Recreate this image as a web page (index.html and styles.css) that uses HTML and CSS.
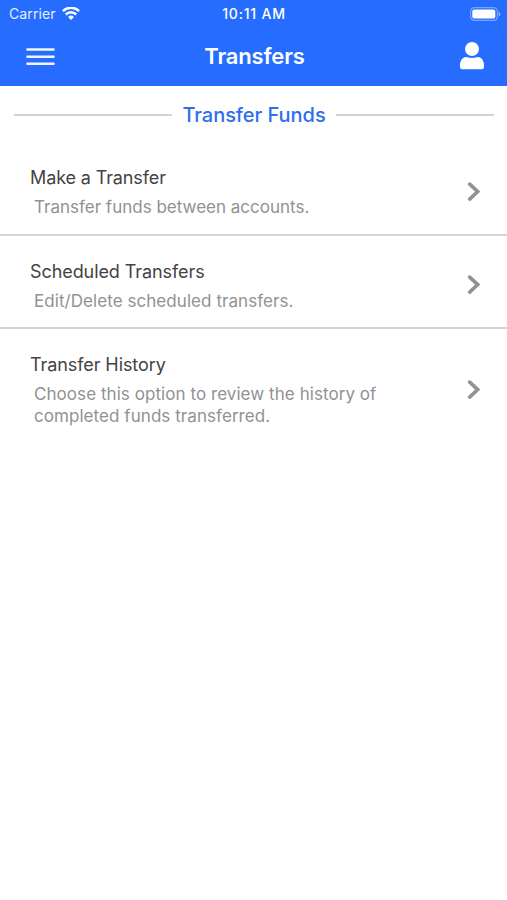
FILE: index.html
```html
<!DOCTYPE html>
<html lang="en">
<head>
<meta charset="utf-8">
<title>Transfers</title>
<link rel="stylesheet" href="styles.css">
</head>
<body>
<header class="header">
  <div class="status">
    <div class="carrier"><span class="carrier-name">Carrier</span>
      <svg class="wifi" width="18" height="14" viewBox="0 0 18 14" fill="none" stroke="#fff" stroke-width="2.5"><path d="M.9 4.1a11.500 11.500 0 0 1 16.200 0M3.800 7.500a7.300 7.300 0 0 1 10.400 0"/><path d="M6.100 9.900a4.100 4.100 0 0 1 5.800 0L9 13z" fill="#fff" stroke="none"/></svg>
    </div>
    <time class="clock">10:11 AM</time>
    <svg class="battery" width="31" height="14" viewBox="0 0 31 14"><rect x=".6" y=".6" width="26.800" height="12.800" rx="3.800" fill="none" stroke="#fff" stroke-opacity=".38" stroke-width="1.200"/><rect x="2.300" y="2.400" width="23" height="9.200" rx="2" fill="#fff"/><path d="M28.600 4.700c2.400.8 2.400 3.800 0 4.600z" fill="#fff" fill-opacity=".45"/></svg>
  </div>
  <nav class="navbar">
    <svg class="menu" width="29" height="18" viewBox="0 0 29 18" stroke="#f0f5ff" stroke-width="2.400" stroke-linecap="round"><path d="M1.400 1.500h26.200M1.400 8.700h26.200M1.400 15.800h26.200"/></svg>
    <h1 class="title">Transfers</h1>
    <svg class="user" width="24" height="28" viewBox="0 0 24 28" fill="#fff"><circle cx="12" cy="7" r="7"/><path d="M0 23.500C0 18.500 2.500 15.200 6 15c2 0 3 .9 6 .9s4-.9 6-.9c3.500.200 6 3.500 6 8.500V25q0 2.200-2.200 2.200H2.200Q0 27.200 0 25z"/></svg>
  </nav>
</header>
<main>
  <h2 class="section-title"><span class="section-text">Transfer Funds</span></h2>
  <ul class="list">
    <li class="row">
      <div class="copy"><h3 class="name">Make a Transfer</h3><p class="desc">Transfer funds between accounts.</p></div>
      <svg class="chevron" width="14" height="20" viewBox="0 0 14 20"><path d="M2.700 2.100 10.700 9.600l-8 7.500"/></svg>
    </li>
    <li class="row">
      <div class="copy"><h3 class="name spaced">Scheduled Transfers</h3><p class="desc wide">Edit/Delete scheduled transfers.</p></div>
      <svg class="chevron" width="14" height="20" viewBox="0 0 14 20"><path d="M2.700 2.100 10.700 9.600l-8 7.500"/></svg>
    </li>
    <li class="row">
      <div class="copy"><h3 class="name spaced">Transfer History</h3><p class="desc wide">Choose this option to review the history of<br>completed funds transferred.</p></div>
      <svg class="chevron" width="14" height="20" viewBox="0 0 14 20"><path d="M2.700 2.100 10.700 9.600l-8 7.500"/></svg>
    </li>
  </ul>
</main>
</body>
</html>
```
FILE: styles.css
```css
* { box-sizing: border-box; }
body { margin: 0; min-height: 900px; background: #fff; font-family: Inter, "Liberation Sans", sans-serif; }
h1, h2, h3, p, ul { margin: 0; padding: 0; font-weight: 400; white-space: nowrap; }
svg { display: block; flex: none; }

.header { height: 86px; background: #266dff; color: #fff; }
.status { display: grid; grid-template-columns: 1fr auto 1fr; align-items: center; height: 27px; padding: 0 6px 0 9px; }
.carrier { display: flex; align-items: center; gap: 6px; font-size: 14px; letter-spacing: .12px; color: #e4edff; }
.clock { margin-right: 2px; font-size: 14px; font-weight: 500; letter-spacing: .8px; }
.battery { justify-self: end; }
.navbar { display: grid; grid-template-columns: 1fr auto 1fr; align-items: center; height: 59px; padding: 0 23px 0 26px; }
.title { padding: 0 1px 2px 0; font-size: 22px; font-weight: 600; line-height: 28px; letter-spacing: -.15px; }
.user { justify-self: end; margin-bottom: 1px; }

.section-title { display: flex; align-items: center; gap: 10px; height: 57px; padding: 0 13px 0 14px; color: #2e6fec; font-size: 20px; font-weight: 500; }
.section-title::before, .section-title::after { content: ""; flex: 1; height: 2px; background: #d2d4d4; }
.section-text { letter-spacing: -.05px; }

.list { list-style: none; }
.row { display: flex; align-items: center; justify-content: space-between; padding: 23px 26px 16px 30px; }
.row + .row { border-top: 2px solid #d4d5d6; }
.row:nth-child(2) { padding-top: 23.500px; padding-bottom: 15.900px; }
.row:nth-child(2) .chevron { margin-bottom: 2px; }
.row:nth-child(3) { padding-top: 23.800px; }
.name { font-size: 18px; line-height: 24px; letter-spacing: -.12px; color: #434345; }
.spaced { letter-spacing: -.08px; }
.desc { padding: 6px 0 0 4px; font-size: 17px; line-height: 22px; color: #909294; }
.wide { letter-spacing: .06px; }
.chevron { fill: none; stroke: #929294; stroke-width: 3.600; stroke-linecap: round; }
```
